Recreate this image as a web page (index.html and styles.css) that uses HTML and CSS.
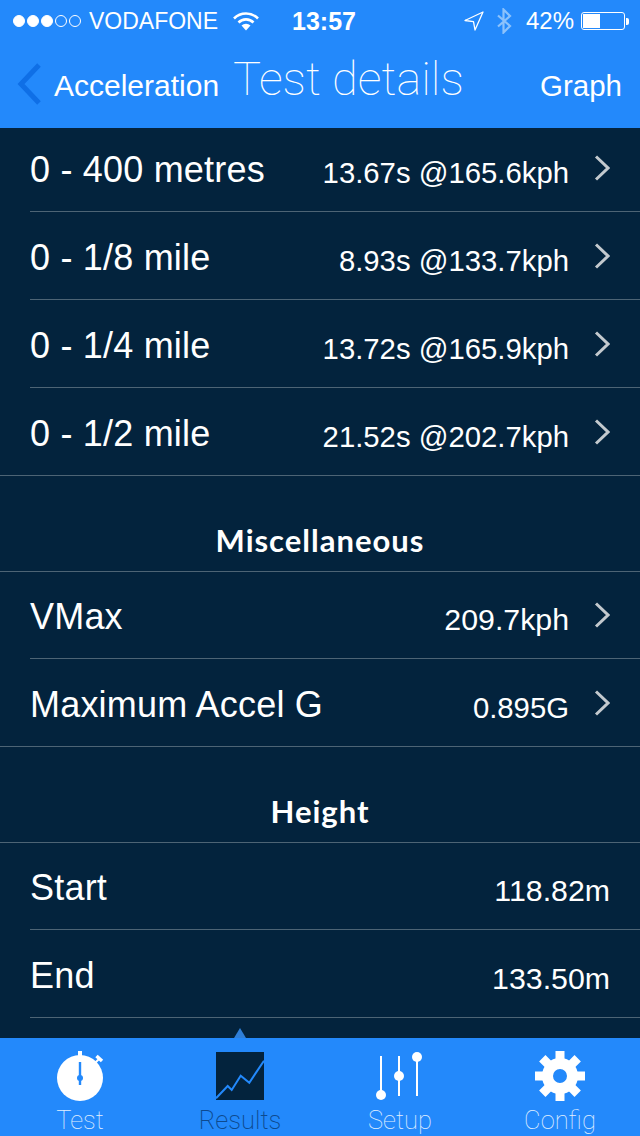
FILE: index.html
```html
<!DOCTYPE html>
<html lang="en">
<head>
  <meta charset="UTF-8">
  <meta name="viewport" content="width=device-width, initial-scale=1">
  <title>Test details</title>
  <link rel="stylesheet" href="styles.css">
</head>
<body>
  <svg class="defs" width="0" height="0">
    <symbol id="chev" viewBox="0 0 16 26">
      <path d="m2 1.500 12 11.500-12 11.500" fill="none" stroke="#c3c9ce" stroke-width="3"/>
    </symbol>
  </svg>
  <div class="app">
    <header class="top">
      <div class="status">
        <div class="status-left">
          <span class="dots"><i class="dot on"></i><i class="dot on"></i><i class="dot on"></i><i class="dot"></i><i class="dot"></i></span>
          <span class="carrier">VODAFONE</span>
          <svg class="wifi" width="26" height="20" viewBox="0 0 26 20">
            <path d="M1 7.500a17 17 0 0 1 24 0" fill="none" stroke="#fff" stroke-width="2.600"/>
            <path d="M5.500 11.500a10.500 10.500 0 0 1 15 0" fill="none" stroke="#fff" stroke-width="2.600"/>
            <path d="M8.500 14.500a6.500 6.500 0 0 1 9 0L13 19.500z" fill="#fff"/>
          </svg>
        </div>
        <span class="time">13:57</span>
        <div class="status-right">
          <svg width="20" height="20" viewBox="0 0 20 20">
            <path d="M19 1 1 9.500l8.500 1.200L11 19z" fill="none" stroke="#fff" stroke-width="1.300" stroke-linejoin="round"/>
          </svg>
          <svg class="bt" width="16" height="26" viewBox="0 0 16 26">
            <path d="M2 7.500 14 18l-6.500 6.500v-23L14 8 2 18.500" fill="none" stroke="#8cc2fb" stroke-width="2.200"/>
          </svg>
          <span class="pct">42%</span>
          <span class="battery"><span class="battery-fill"></span></span>
          <span class="battery-tip"></span>
        </div>
      </div>
      <nav class="nav">
        <svg class="back" width="28" height="44" viewBox="0 0 28 44">
          <path d="M23 3 5 22l18 19" fill="none" stroke="#0f6fe6" stroke-width="5"/>
        </svg>
        <span class="nav-back">Acceleration</span>
        <h1 class="nav-title">Test details</h1>
        <span class="nav-action">Graph</span>
      </nav>
    </header>

    <main class="list">
      <div class="row first"><span class="label">0 - 400 metres</span><span class="value">13.67s @165.6kph</span><svg class="chev" width="16" height="26"><use href="#chev"/></svg></div>
      <div class="row"><span class="label">0 - 1/8 mile</span><span class="value">8.93s @133.7kph</span><svg class="chev" width="16" height="26"><use href="#chev"/></svg></div>
      <div class="row"><span class="label">0 - 1/4 mile</span><span class="value">13.72s @165.9kph</span><svg class="chev" width="16" height="26"><use href="#chev"/></svg></div>
      <div class="row last"><span class="label">0 - 1/2 mile</span><span class="value">21.52s @202.7kph</span><svg class="chev" width="16" height="26"><use href="#chev"/></svg></div>

      <h2 class="section">Miscellaneous</h2>
      <div class="row"><span class="label">VMax</span><span class="value wide">209.7kph</span><svg class="chev" width="16" height="26"><use href="#chev"/></svg></div>
      <div class="row last"><span class="label">Maximum Accel G</span><span class="value">0.895G</span><svg class="chev" width="16" height="26"><use href="#chev"/></svg></div>

      <h2 class="section">Height</h2>
      <div class="row"><span class="label">Start</span><span class="value wide">118.82m</span></div>
      <div class="row"><span class="label">End</span><span class="value wide">133.50m</span></div>
    </main>

    <footer class="tabs">
      <span class="tab-marker"></span>
      <div class="tab">
        <svg width="56" height="56" viewBox="0 0 56 56">
          <circle cx="28" cy="30" r="23" fill="#fff"/>
          <rect x="26" y="3" width="4" height="6" fill="#fff"/>
          <path d="m43 15 4-4" stroke="#fff" stroke-width="2"/>
          <path d="m44.500 8 5.500 5" stroke="#fff" stroke-width="3.500"/>
          <rect x="26.800" y="14" width="2.400" height="23" fill="#2389fb"/>
          <circle cx="28" cy="30" r="3" fill="#2389fb"/>
        </svg>
        <span class="tab-label">Test</span>
      </div>
      <div class="tab active">
        <svg width="56" height="56" viewBox="0 0 56 56">
          <rect x="4" y="4" width="48" height="48" fill="#03233d"/>
          <path d="M4 50.300 15.700 38l4 4 9-14.300 8.600 7L52 12.700" fill="none" stroke="#2389fb" stroke-width="2"/>
        </svg>
        <span class="tab-label">Results</span>
      </div>
      <div class="tab">
        <svg width="56" height="56" viewBox="0 0 56 56">
          <path d="M9 8v40M27 8v40M45 8v40" stroke="#fff" stroke-width="2"/>
          <circle cx="9" cy="47" r="5" fill="#fff"/>
          <circle cx="27" cy="28" r="5" fill="#fff"/>
          <circle cx="45" cy="9" r="5" fill="#fff"/>
        </svg>
        <span class="tab-label">Setup</span>
      </div>
      <div class="tab">
        <svg width="56" height="56" viewBox="0 0 56 56">
          <path d="M28 13V3M28 43v10M13 28H3M43 28h10M17.400 17.400l-7.100-7.100M38.600 38.600l7.100 7.100M38.600 17.400l7.100-7.100M17.400 38.600l-7.100 7.100" stroke="#fff" stroke-width="9"/>
          <circle cx="28" cy="28" r="12.500" fill="none" stroke="#fff" stroke-width="11"/>
        </svg>
        <span class="tab-label">Config</span>
      </div>
    </footer>
  </div>
</body>
</html>
```

FILE: styles.css
```css
:root {
  --blue: #2389fb;
  --navy: #03233d;
  --line: #4d6475;
}
body {
  margin: 0;
  font-family: 'Liberation Sans', Arial, sans-serif;
  color: #fff;
  background: var(--navy);
}
.defs {
  display: block;
}
.app {
  height: 1136px;
  display: flex;
  flex-direction: column;
  overflow: hidden;
}
.top {
  background: var(--blue);
  height: 128px;
  flex: none;
}
.status {
  height: 40px;
  box-sizing: border-box;
  padding: 2px 11px 0 13px;
  display: flex;
  align-items: center;
  font-size: 23px;
}
.status-left {
  display: flex;
  align-items: center;
  width: 279px;
}
.dots {
  display: flex;
  gap: 2px;
  margin-right: 8px;
}
.dot {
  width: 12px;
  height: 12px;
  box-sizing: border-box;
  border: 1px solid #fff;
  border-radius: 50%;
}
.dot.on {
  background: #fff;
}
.carrier {
  margin-right: 15px;
}
.time {
  font-size: 25px;
  font-weight: bold;
  width: 160px;
}
.status-right {
  display: flex;
  align-items: center;
  flex: 1;
  justify-content: flex-end;
}
.bt {
  margin: 0 14px 0 12px;
}
.pct {
  font-size: 24px;
  margin-right: 7px;
}
.battery {
  width: 44px;
  height: 18px;
  box-sizing: border-box;
  border: 1px solid #fff;
  border-radius: 3px;
  padding: 1px;
  display: block;
}
.battery-fill {
  display: block;
  width: 17px;
  height: 14px;
  background: #fff;
}
.battery-tip {
  width: 3px;
  height: 7px;
  margin-left: 1px;
  background: #fff;
  border-radius: 0 2px 2px 0;
}
.nav {
  height: 88px;
  display: flex;
  align-items: center;
  padding: 0 18px 0 16px;
  font-size: 30px;
}
.nav-back {
  margin: 4px 14px 0 10px;
}
.nav-title {
  margin: 0;
  font-family: Roboto, sans-serif;
  font-weight: 100;
  font-size: 47px;
  flex: 1;
  position: relative;
  top: -6px;
}
.nav-action {
  margin-top: 4px;
  font-size: 29.500px;
}
.list {
  flex: 1;
  min-height: 0;
  overflow: hidden;
}
.row {
  height: 88px;
  box-sizing: border-box;
  margin-left: 30px;
  padding-right: 30px;
  border-bottom: 1px solid var(--line);
  display: flex;
  align-items: center;
}
/* list is scrolled a little, top of the first row sits under the nav bar */
.row.first {
  margin-top: -4px;
}
.section + .row {
  height: 87px;
}
.row.last {
  margin-left: 0;
  padding-left: 30px;
}
.label {
  font-size: 36px;
  letter-spacing: 0.200px;
  flex: 1;
  position: relative;
  top: 2px;
}
.value {
  font-size: 29.300px;
  position: relative;
  top: 5px;
}
.value.wide {
  font-size: 30.300px;
}
.chev {
  margin-left: 25px;
  flex: none;
}
.section {
  margin: 0;
  height: 96px;
  box-sizing: border-box;
  padding-bottom: 12px;
  border-bottom: 1px solid var(--line);
  display: flex;
  align-items: flex-end;
  justify-content: center;
  font-family: Lato, sans-serif;
  font-weight: 700;
  font-size: 31px;
  letter-spacing: 1px;
}
.tabs {
  flex: none;
  height: 98px;
  background: var(--blue);
  display: grid;
  grid-template-columns: repeat(4, 1fr);
  position: relative;
}
.tab-marker {
  position: absolute;
  left: 234px;
  top: -10px;
  border: 6px solid transparent;
  border-top: 0;
  border-bottom: 10px solid #2f7fd8;
}
.tab {
  display: flex;
  flex-direction: column;
  align-items: center;
  padding-top: 10px;
}
.tab svg {
  display: block;
}
.tab-label {
  font-family: Roboto, sans-serif;
  font-weight: 100;
  font-size: 25.500px;
  line-height: 30px;
  margin-top: 1px;
  color: #e4f1ff;
}
.tab.active .tab-label {
  color: #0d4a8f;
  font-weight: 200;
}
```
